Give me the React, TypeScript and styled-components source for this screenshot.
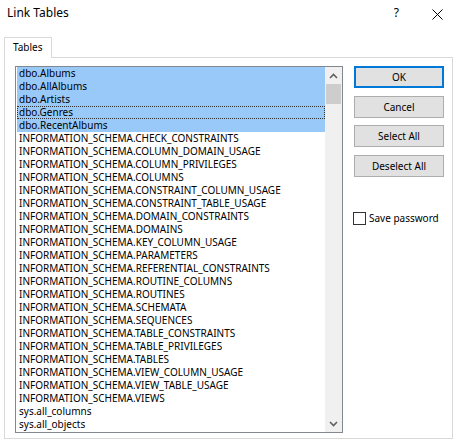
import React from 'react';
import styled, { createGlobalStyle } from 'styled-components';

const GlobalStyle = createGlobalStyle`
  html, body {
    margin: 0;
    padding: 0;
    background: #ffffff;
  }
  body {
    font-family: "Noto Sans", "Open Sans", Arial, sans-serif;
    color: #000;
  }
`;

const Dialog = styled.div`
  width: 459px;
  height: 446px;
  background: #ffffff;
  box-sizing: border-box;
  overflow: hidden;
`;

const TitleBar = styled.div`
  height: 37px;
  display: flex;
  align-items: flex-start;
  padding: 5px 0 0 7px;
  box-sizing: border-box;
`;

const TitleText = styled.div`
  flex: 1;
  font-size: 12px;
  line-height: 16px;
  color: #000;
`;

const HelpMark = styled.div`
  font-size: 12px;
  line-height: 16px;
  margin-right: 33px;
  color: #000;
`;

const CloseIcon = styled.svg`
  margin-top: 4px;
  margin-right: 16px;
`;

const TabStrip = styled.div`
  display: flex;
  padding-left: 4px;
`;

const Tab = styled.div`
  width: 48px;
  height: 21px;
  border: 1px solid #d9d9d9;
  border-bottom: none;
  box-sizing: border-box;
  font-size: 10px;
  line-height: 19px;
  padding-left: 8px;
  background: #ffffff;
  position: relative;
  z-index: 1;
  margin-bottom: -1px;
`;

const Panel = styled.div`
  margin-left: 4px;
  width: 449px;
  height: 382px;
  border: 1px solid #d9d9d9;
  box-sizing: border-box;
  display: flex;
  padding: 8px 0 0 10px;
`;

const ListBox = styled.div`
  width: 328px;
  height: 367px;
  border: 1px solid #828790;
  box-sizing: border-box;
  display: flex;
  overflow: hidden;
`;

const Items = styled.div`
  flex: 1;
  padding: 0 0 0 1px;
  overflow: hidden;
`;

const Item = styled.div<{ $selected?: boolean; $focused?: boolean }>`
  height: 13px;
  line-height: 13px;
  font-size: 10px;
  padding-left: 2px;
  white-space: nowrap;
  background: ${p => (p.$selected ? '#99c9f8' : 'transparent')};
  outline: ${p => (p.$focused ? '1px dotted #333' : 'none')};
  outline-offset: -1px;
  color: #000;
`;

const ScrollBar = styled.div`
  width: 17px;
  background: #f0f0f0;
  display: flex;
  flex-direction: column;
  align-items: center;
`;

const ScrollArrow = styled.div`
  height: 17px;
  width: 17px;
  display: flex;
  align-items: center;
  justify-content: center;
`;

const ScrollTrack = styled.div`
  flex: 1;
  width: 17px;
`;

const Thumb = styled.div`
  width: 15px;
  height: 20px;
  margin: 0 auto;
  background: #cdcdcd;
`;

const SideColumn = styled.div`
  display: flex;
  flex-direction: column;
  margin-left: 11px;
  width: 90px;
`;

const DlgButton = styled.button<{ $default?: boolean }>`
  width: 90px;
  height: 22px;
  margin-bottom: 7.5px;
  background: #e1e1e1;
  border: 1px solid ${p => (p.$default ? '#0078d7' : '#adadad')};
  box-shadow: ${p => (p.$default ? 'inset 0 0 0 1px #0078d7' : 'none')};
  font-family: "Noto Sans", "Open Sans", Arial, sans-serif;
  font-size: 10px;
  color: #000;
  padding: 0;
  border-radius: 0;
`;

const CheckRow = styled.label`
  display: flex;
  align-items: center;
  margin-top: 27px;
  margin-left: -1px;
  font-size: 10px;
  gap: 3px;
  white-space: nowrap;
`;

const CheckBox = styled.span`
  width: 13px;
  height: 13px;
  flex: none;
  border: 1px solid #333333;
  box-sizing: border-box;
  background: #fff;
`;

const items = [
  'dbo.Albums',
  'dbo.AllAlbums',
  'dbo.Artists',
  'dbo.Genres',
  'dbo.RecentAlbums',
  'INFORMATION_SCHEMA.CHECK_CONSTRAINTS',
  'INFORMATION_SCHEMA.COLUMN_DOMAIN_USAGE',
  'INFORMATION_SCHEMA.COLUMN_PRIVILEGES',
  'INFORMATION_SCHEMA.COLUMNS',
  'INFORMATION_SCHEMA.CONSTRAINT_COLUMN_USAGE',
  'INFORMATION_SCHEMA.CONSTRAINT_TABLE_USAGE',
  'INFORMATION_SCHEMA.DOMAIN_CONSTRAINTS',
  'INFORMATION_SCHEMA.DOMAINS',
  'INFORMATION_SCHEMA.KEY_COLUMN_USAGE',
  'INFORMATION_SCHEMA.PARAMETERS',
  'INFORMATION_SCHEMA.REFERENTIAL_CONSTRAINTS',
  'INFORMATION_SCHEMA.ROUTINE_COLUMNS',
  'INFORMATION_SCHEMA.ROUTINES',
  'INFORMATION_SCHEMA.SCHEMATA',
  'INFORMATION_SCHEMA.SEQUENCES',
  'INFORMATION_SCHEMA.TABLE_CONSTRAINTS',
  'INFORMATION_SCHEMA.TABLE_PRIVILEGES',
  'INFORMATION_SCHEMA.TABLES',
  'INFORMATION_SCHEMA.VIEW_COLUMN_USAGE',
  'INFORMATION_SCHEMA.VIEW_TABLE_USAGE',
  'INFORMATION_SCHEMA.VIEWS',
  'sys.all_columns',
  'sys.all_objects',
];

const Chevron: React.FC<{ up?: boolean }> = ({ up }) => (
  <svg width="9" height="6" viewBox="0 0 9 6">
    <path
      d={up ? 'M1 5 L4.5 1.5 L8 5' : 'M1 1 L4.5 4.5 L8 1'}
      fill="none"
      stroke="#606060"
      strokeWidth="1.6"
    />
  </svg>
);

const App: React.FC = () => {
  return (
    <Dialog>
      <GlobalStyle />
      <TitleBar>
        <TitleText>Link Tables</TitleText>
        <HelpMark>?</HelpMark>
        <CloseIcon width="11" height="11" viewBox="0 0 11 11">
          <path d="M0.5 0.5 L10.5 10.5 M10.5 0.5 L0.5 10.5" stroke="#000" strokeWidth="1" />
        </CloseIcon>
      </TitleBar>

      <TabStrip>
        <Tab>Tables</Tab>
      </TabStrip>

      <Panel>
        <ListBox>
          <Items>
            {items.map((name, i) => (
              <Item key={name} $selected={i < 5} $focused={i === 3}>
                {name}
              </Item>
            ))}
          </Items>
          <ScrollBar>
            <ScrollArrow>
              <Chevron up />
            </ScrollArrow>
            <ScrollTrack>
              <Thumb />
            </ScrollTrack>
            <ScrollArrow>
              <Chevron />
            </ScrollArrow>
          </ScrollBar>
        </ListBox>

        <SideColumn>
          <DlgButton $default>OK</DlgButton>
          <DlgButton>Cancel</DlgButton>
          <DlgButton>Select All</DlgButton>
          <DlgButton>Deselect All</DlgButton>
          <CheckRow>
            <CheckBox />
            Save password
          </CheckRow>
        </SideColumn>
      </Panel>
    </Dialog>
  );
};

export default App;
